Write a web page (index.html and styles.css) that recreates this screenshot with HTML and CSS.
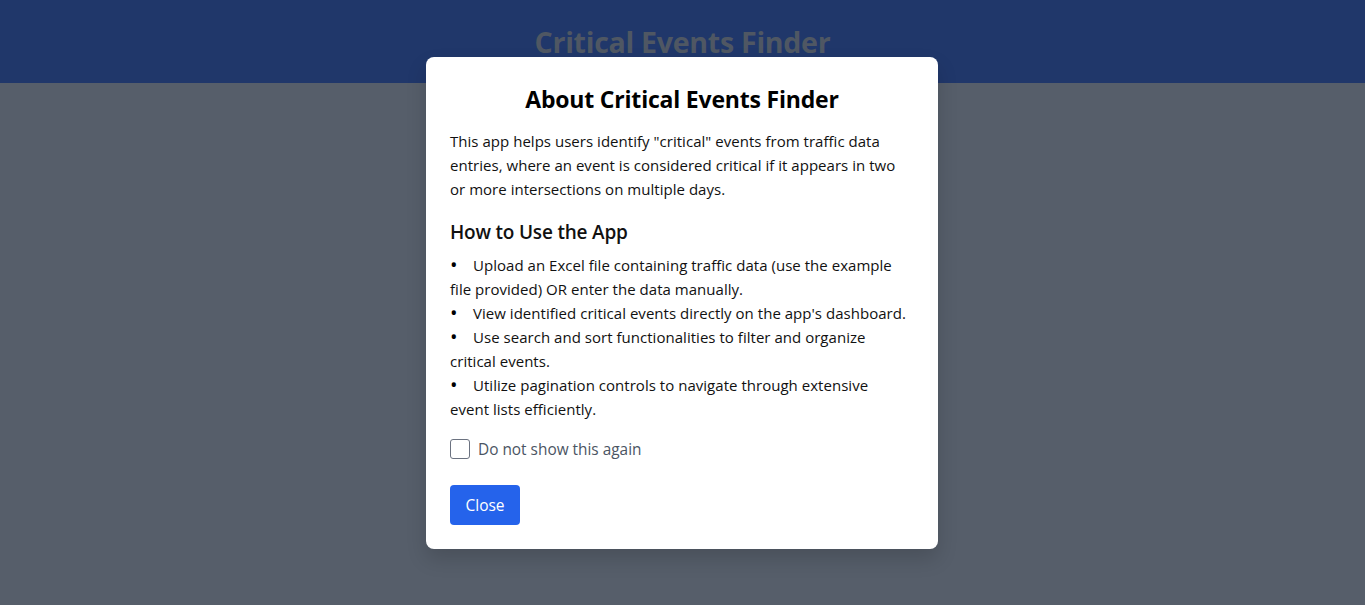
FILE: index.html
```html
<!DOCTYPE html>
<html>
<head>
<meta charset="utf-8">
<link rel="stylesheet" href="styles.css">
</head>
<body>
<header class="top">
  <h1 class="app-title">Critical Events Finder</h1>
</header>
<div class="overlay">
  <div class="modal">
    <h2 class="modal-title">About Critical Events Finder</h2>
    <p class="intro">This app helps users identify "critical" events from traffic data entries, where an event is considered critical if it appears in two or more intersections on multiple days.</p>
    <h3 class="sub">How to Use the App</h3>
    <ul class="steps">
      <li>Upload an Excel file containing traffic data (use the example file provided) OR enter the data manually.</li>
      <li>View identified critical events directly on the app's dashboard.</li>
      <li>Use search and sort functionalities to filter and organize critical events.</li>
      <li>Utilize pagination controls to navigate through extensive event lists efficiently.</li>
    </ul>
    <label class="check"><span class="box"></span><span class="check-label">Do not show this again</span></label>
    <button class="close">Close</button>
  </div>
</div>
</body>
</html>
```
FILE: styles.css
```css
* { box-sizing: border-box; }
html, body { margin: 0; padding: 0; }
body {
  background: #565e6a;
  font-family: "Open Sans", "Noto Sans", sans-serif;
  height: 605px;
  overflow: hidden;
}
.top {
  background: #20376a;
  height: 83px;
  display: flex;
  justify-content: center;
  align-items: flex-start;
}
.app-title {
  margin: 22px 0 0;
  font-size: 28.6px;
  font-weight: 700;
  color: #4f5763;
  line-height: 40px;
  letter-spacing: -0.3px;
}
.overlay {
  position: absolute;
  inset: 0;
  display: flex;
  justify-content: center;
  align-items: flex-start;
  padding-top: 57px;
  padding-right: 1px;
}
.modal {
  width: 512px;
  background: #fff;
  border-radius: 8px;
  padding: 24px;
  box-shadow: 0 10px 20px rgba(0,0,0,0.15);
  color: #111;
}
.modal-title {
  margin: 2px 0 0;
  text-align: center;
  font-size: 23px;
  line-height: 32px;
  font-weight: 700;
  color: #000;
  letter-spacing: -0.2px;
}
.intro {
  margin: 14px 0 0;
  font-size: 15px;
  line-height: 24px;
  letter-spacing: 0.03px;
}
.sub {
  margin: 17px 0 0;
  font-size: 19px;
  line-height: 28px;
  font-weight: 600;
  letter-spacing: -0.2px;
}
.steps {
  list-style: none;
  margin: 7px 0 0;
  padding: 0 4px 0 0;
  font-size: 15px;
  line-height: 24px;
  letter-spacing: 0.03px;
}
.steps li::before {
  content: "\2022";
  display: inline-block;
  width: 23px;
  font-size: 20px;
  line-height: 0;
  vertical-align: -1px;
  color: #000;
}
.check {
  display: flex;
  align-items: center;
  margin-top: 16px;
  height: 24px;
}
.box {
  width: 20px;
  height: 20px;
  border: 1px solid #6b7280;
  border-radius: 3px;
  margin-right: 8px;
}
.check-label {
  font-size: 15.4px;
  color: #4b5563;
}
.close {
  display: block;
  margin-top: 24px;
  width: 70px;
  height: 40px;
  background: #2563eb;
  color: #fff;
  border: none;
  border-radius: 4px;
  font-family: inherit;
  font-size: 15.5px;
  padding: 0;
}
```
